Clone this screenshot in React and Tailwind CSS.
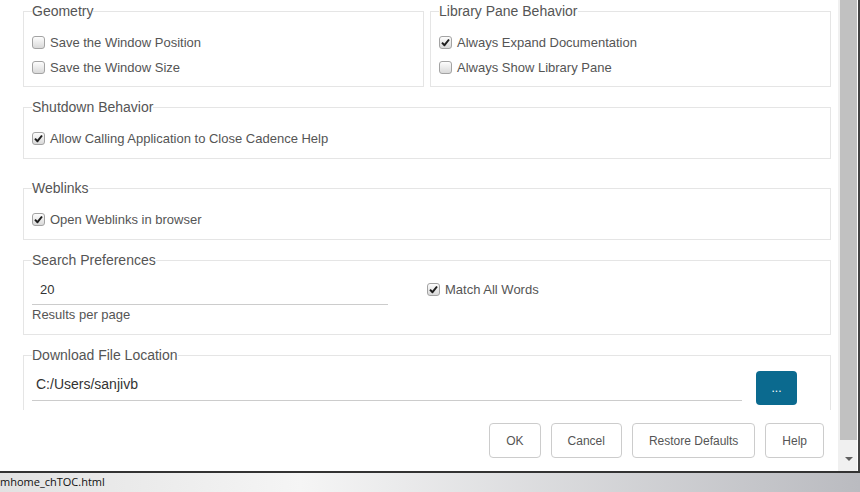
import React from "react";

function Check({ checked }) {
  return (
    <span className="flex size-[13px] shrink-0 items-center justify-center rounded-[3px] border border-[#a3a3a3] bg-linear-to-b from-[#fdfdfd] to-[#d9d9d9]">
      {checked && (
        <svg width="9" height="9" viewBox="0 0 9 9">
          <path d="M1 4.6 L3.5 7.2 L8 1.5" fill="none" stroke="#1e1e1e" strokeWidth="2" strokeLinejoin="round" />
        </svg>
      )}
    </span>
  );
}

function Option({ label, checked }) {
  return (
    <label className="flex h-[25px] items-center gap-[5px] text-[13px] text-[#555]">
      <Check checked={checked} />
      <span>{label}</span>
    </label>
  );
}

function Group({ title, className = "", children }) {
  return (
    <fieldset className={`min-w-0 border border-[#e5e5e5] px-[8px] ${className}`}>
      <legend className="text-[14px] leading-[20px] text-[#555]">{title}</legend>
      {children}
    </fieldset>
  );
}

function FooterButton({ children }) {
  return (
    <button className="h-[35px] rounded-[4px] border border-[#ccc] bg-white px-[16px] text-[12px] text-[#555]">
      {children}
    </button>
  );
}

export default function App() {
  return (
    <div className="flex h-[492px] w-[860px] flex-col overflow-hidden bg-white font-['Liberation_Sans',Arial,sans-serif]">
      <div className="flex h-[471px]">
        <div className="flex w-[838px] flex-col">
          {/* preferences */}
          <div className="h-[410px] overflow-hidden pl-[23px] pr-[7px] pt-[1px]">
            <div className="flex gap-[6px]">
              <Group title="Geometry" className="flex-1">
                <div className="pb-[6px] pt-[9px]">
                  <Option label="Save the Window Position" />
                  <Option label="Save the Window Size" />
                </div>
              </Group>
              <Group title="Library Pane Behavior" className="flex-1">
                <div className="pb-[6px] pt-[9px]">
                  <Option label="Always Expand Documentation" checked />
                  <Option label="Always Show Library Pane" />
                </div>
              </Group>
            </div>

            <Group title="Shutdown Behavior" className="mt-[10px]">
              <div className="pb-[7px] pt-[9px]">
                <Option label="Allow Calling Application to Close Cadence Help" checked />
              </div>
            </Group>

            <Group title="Weblinks" className="mt-[19px]">
              <div className="pb-[7px] pt-[9px]">
                <Option label="Open Weblinks in browser" checked />
              </div>
            </Group>

            <Group title="Search Preferences" className="mt-[10px]">
              <div className="grid grid-cols-2 pb-[10px] pt-[4px]">
                <div>
                  <input
                    defaultValue="20"
                    className="block h-[31px] w-[90%] border-b border-[#ccc] pl-[8px] text-[13px] text-[#333] outline-none"
                  />
                  <div className="mt-[1px] text-[13px] leading-[18px] text-[#555]">Results per page</div>
                </div>
                <label className="flex h-[31px] items-center gap-[5px] text-[13px] text-[#555]">
                  <Check checked />
                  <span>Match All Words</span>
                </label>
              </div>
            </Group>

            <Group title="Download File Location" className="mt-[10px]">
              <div className="flex items-start pb-[20px] pt-[3px]">
                <input
                  defaultValue="C:/Users/sanjivb"
                  className="block h-[33px] min-w-0 flex-1 border-b border-[#ccc] pl-[4px] text-[14px] text-[#333] outline-none"
                />
                <button className="ml-[14px] mr-[25px] mt-[3px] h-[34px] w-[41px] rounded-[4px] bg-[#0b6a8f] text-[12px] text-white">
                  ...
                </button>
              </div>
            </Group>
          </div>

          {/* dialog buttons */}
          <div className="flex flex-1 justify-end gap-[10px] pr-[14px] pt-[13px]">
            <FooterButton>OK</FooterButton>
            <FooterButton>Cancel</FooterButton>
            <FooterButton>Restore Defaults</FooterButton>
            <FooterButton>Help</FooterButton>
          </div>
        </div>

        {/* scrollbar */}
        <div className="flex w-[19px] flex-col bg-[#f0f0f0]">
          <div className="ml-[2px] h-[440px] bg-[#c1c1c1]" />
          <div className="ml-[2px] flex flex-1 items-end justify-center pb-[10px]">
            <svg width="8" height="4" viewBox="0 0 8 4">
              <path d="M0 0 H8 L4 4 Z" fill="#606060" />
            </svg>
          </div>
        </div>
        <div className="w-[1px] bg-white" />
        <div className="w-[2px] bg-[#434343]" />
      </div>

      <div className="h-[2px] bg-[#333]" />

      {/* status bar */}
      <div className="flex h-[19px] items-center bg-linear-to-r from-[#e2e2e2] via-[#f5f5f5] via-35% to-[#babbc0] font-['Open_Sans',sans-serif] text-[11px] text-[#111]">
        mhome_chTOC.html
      </div>
    </div>
  );
}
